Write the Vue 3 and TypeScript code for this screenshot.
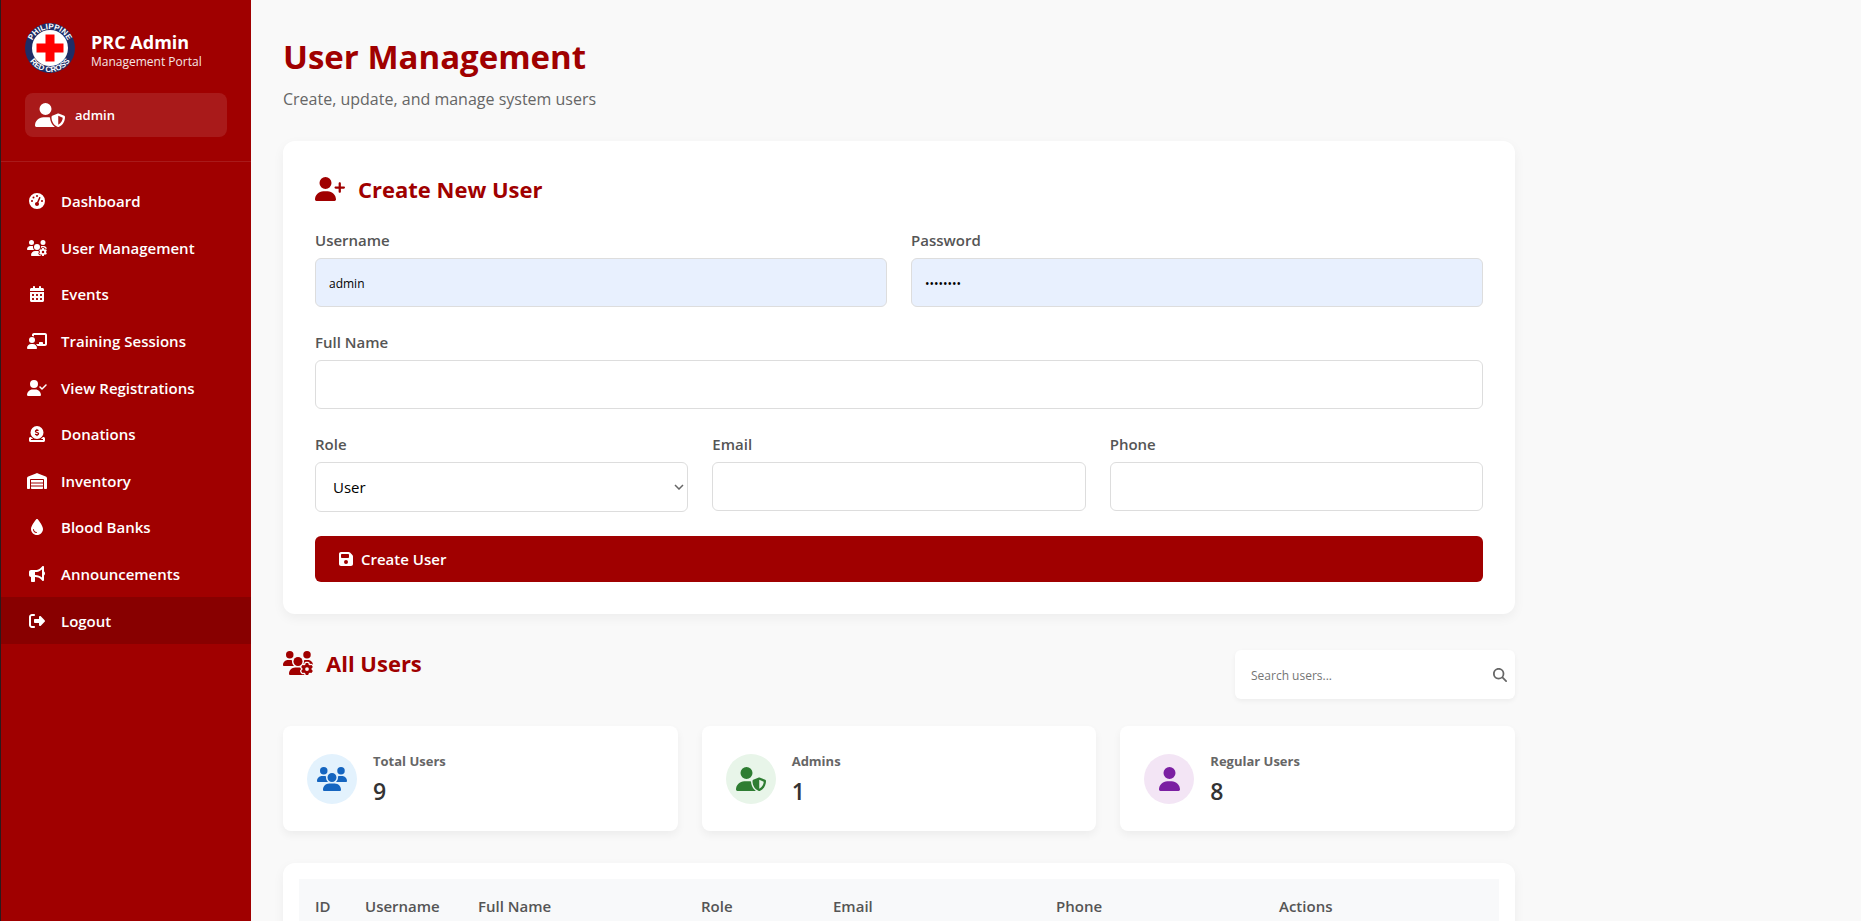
<script setup lang="ts">
import { ref } from 'vue'

interface Icon {
  w: number
  d: string[]
}

const userBody =
  'M96 128a128 128 0 1 1 256 0A128 128 0 1 1 96 128zM0 482.3C0 383.8 79.8 304 178.3 304l91.4 0C368.2 304 448 383.8 448 482.3c0 16.4-13.3 29.7-29.7 29.7L29.7 512C13.3 512 0 498.7 0 482.3z'

const calendarCells = [64, 192, 320]
  .flatMap((x) => [272, 400].map((y) => `M${x} ${y}v32c0 8.800 7.200 16 16 16h32c8.800 0 16-7.200 16-16v-32c0-8.800-7.200-16-16-16h-32c-8.800 0-16 7.200-16 16z`))
  .join('')

const icons: Record<string, Icon> = {
  gauge: {
    w: 512,
    d: ['M0 256a256 256 0 1 1 512 0A256 256 0 1 1 0 256zM288 96a32 32 0 1 0 -64 0 32 32 0 1 0 64 0zM256 416c35.3 0 64-28.7 64-64c0-17.4-6.9-33.1-18.1-44.6L366 161.7c5.3-12.1-.2-26.3-12.3-31.6s-26.3 .2-31.6 12.3L257.9 288c-.6 0-1.3 0-1.9 0c-35.3 0-64 28.7-64 64s28.7 64 64 64zM176 144a32 32 0 1 0 -64 0 32 32 0 1 0 64 0zM96 288a32 32 0 1 0 0-64 32 32 0 1 0 0 64zm352-32a32 32 0 1 0 -64 0 32 32 0 1 0 64 0z'],
  },
  usersGear: {
    w: 640,
    d: [
      'M144 160A80 80 0 1 0 144 0a80 80 0 1 0 0 160zm368 0A80 80 0 1 0 512 0a80 80 0 1 0 0 160zM0 298.7C0 310.4 9.6 320 21.3 320l213.3 0c.2 0 .4 0 .7 0c-26.6-23.5-43.3-57.8-43.3-96c0-7.6 .7-15 1.9-22.3c-13.6-6.3-28.7-9.7-44.6-9.7l-42.7 0C47.800 192 0 239.800 0 298.700z',
      'M416 224a96 96 0 1 0-192 0 96 96 0 1 0 192 0z',
      'M385.400 380.200c-10.300-5.900-18.100-16.200-20.800-28.200l-103.200 0C187.700 352 128 411.700 128 485.300c0 14.700 11.900 26.700 26.700 26.700l300.600 0c-2.100-5.200-3.200-10.900-3.200-16.400l0-3c-1.300-.7-2.700-1.500-4-2.300l-2.600 1.500c-16.800 9.700-40.500 8-54.700-9.700c-4.500-5.600-8.600-11.500-12.400-17.600l-2.600-4.500c-3.500-6.400-6.500-12.800-9.200-19.500c-8.200-21.200 2.200-42.600 19-52.300l2.700-1.500c0-.8 0-1.500 0-2.300s0-1.500 0-2.300l-2.700-1.500z',
      'M533.300 192l-42.700 0c-15.900 0-31 3.500-44.600 9.700c1.300 7.200 1.900 14.700 1.900 22.300c0 17.400-3.500 33.900-9.700 49c2.500 .9 4.900 2 7.100 3.300l2.600 1.500c1.300-.8 2.600-1.600 4-2.300l0-3c0-19.400 13.300-39.100 35.800-42.600c7.900-1.200 16-1.900 24.200-1.900s16.300 .6 24.200 1.900c22.500 3.500 35.800 23.200 35.800 42.600l0 3c1.300 .7 2.700 1.500 4 2.300l2.600-1.500c16.800-9.700 40.500-8 54.700 9.700c2.300 2.800 4.500 5.800 6.600 8.700c-2.100-57.100-49-102.700-106.600-102.700z',
      'M624.600 355.900c6.300-3.600 9.500-11.100 6.800-18c-2.100-5.500-4.600-10.800-7.400-15.900l-2.300-4c-3.100-5.100-6.500-9.900-10.200-14.500c-4.600-5.700-12.700-6.700-19-3l-2.900 1.700c-9.200 5.300-20.400 4-29.600-1.300s-16.100-14.500-16.100-25.100l0-3.400c0-7.300-4.900-13.800-12.100-14.900c-6.500-1-13.100-1.500-19.900-1.500s-13.400 .5-19.900 1.500c-7.200 1.100-12.100 7.600-12.100 14.900l0 3.400c0 10.600-6.900 19.800-16.100 25.100s-20.400 6.600-29.600 1.300l-2.900-1.700c-6.300-3.600-14.400-2.600-19 3c-3.700 4.600-7.100 9.500-10.200 14.600l-2.300 3.900c-2.800 5.100-5.300 10.400-7.400 15.900c-2.600 6.800 .5 14.300 6.800 17.900l2.900 1.700c9.200 5.300 13.700 15.800 13.700 26.400s-4.500 21.100-13.700 26.400l-3 1.700c-6.300 3.600-9.500 11.100-6.800 17.900c2.100 5.500 4.600 10.700 7.400 15.800l2.400 4.100c3 5.100 6.400 9.900 10.100 14.500c4.600 5.700 12.700 6.700 19 3l2.900-1.700c9.200-5.300 20.400-4 29.600 1.300s16.100 14.500 16.100 25.100l0 3.400c0 7.300 4.900 13.800 12.100 14.900c6.500 1 13.100 1.500 19.900 1.500s13.400-.5 19.900-1.500c7.200-1.100 12.100-7.600 12.100-14.900l0-3.400c0-10.600 6.900-19.800 16.100-25.100s20.400-6.600 29.600-1.300l2.900 1.700c6.300 3.600 14.400 2.600 19-3c3.700-4.600 7.100-9.400 10.100-14.500l2.400-4.200c2.800-5.100 5.300-10.300 7.400-15.800c2.600-6.800-.5-14.300-6.800-17.900l-3-1.700c-9.200-5.300-13.700-15.800-13.700-26.400s4.500-21.100 13.700-26.400l3-1.700zM472 384a40 40 0 1 1 80 0 40 40 0 1 1 -80 0z',
    ],
  },
  calendar: {
    w: 448,
    d: [
      'M128 0c17.7 0 32 14.3 32 32l0 32 128 0 0-32c0-17.7 14.3-32 32-32s32 14.3 32 32l0 32 48 0c26.5 0 48 21.5 48 48l0 48L0 160l0-48C0 85.5 21.5 64 48 64l48 0 0-32c0-17.7 14.3-32 32-32z',
      'M0 192l448 0 0 272c0 26.5-21.5 48-48 48L48 512c-26.5 0-48-21.5-48-48L0 192z' + calendarCells,
    ],
  },
  chalkboard: {
    w: 640,
    d: ['M160 64c0-35.3 28.7-64 64-64L576 0c35.3 0 64 28.7 64 64l0 288c0 35.3-28.7 64-64 64l-239.2 0c-11.8-25.5-29.9-47.5-52.4-64l99.6 0 0-32c0-17.7 14.3-32 32-32l64 0c17.7 0 32 14.3 32 32l0 32 64 0 0-288L224 64l0 49.1C205.2 102.2 183.3 96 160 96l0-32zm0 64a96 96 0 1 1 0 192 96 96 0 1 1 0-192zM133.3 352l53.3 0C260.3 352 320 411.7 320 485.3c0 14.7-11.9 26.7-26.7 26.7L26.7 512C11.9 512 0 500.1 0 485.3C0 411.7 59.7 352 133.3 352z'],
  },
  userCheck: {
    w: 640,
    d: [userBody, 'M625 177L497 305c-9.4 9.4-24.6 9.4-33.9 0l-64-64c-9.4-9.4-9.4-24.6 0-33.900s24.600-9.400 33.900 0l47 47L591 143c9.400-9.400 24.600-9.400 33.900 0s9.400 24.600 0 33.900z'],
  },
  donate: {
    w: 512,
    d: [
      'M256 0a208 208 0 1 1 0 416a208 208 0 1 1 0-416zM256 91.9c-11.1 0-20.1 9-20.1 20.1l0 6c-5.6 1.2-10.9 2.9-15.9 5.1c-15 6.8-27.9 19.4-31.1 37.7c-1.8 10.2-.8 20 3.4 29c4.2 8.8 10.7 15 17.3 19.5c11.6 7.9 26.9 12.5 38.6 16l2.2 .7c13.9 4.2 23.4 7.4 29.3 11.7c2.5 1.8 3.4 3.2 3.7 4c.3 .8 .9 2.6 .2 6.7c-.6 3.5-2.5 6.4-8 8.8c-6.1 2.6-16 3.9-28.8 1.9c-6-1-16.7-4.6-26.2-7.9c-2.2-.7-4.3-1.5-6.4-2.1c-10.5-3.5-21.8 2.2-25.3 12.7s2.2 21.8 12.7 25.3c1.2 .4 2.7 .9 4.4 1.5c7.9 2.7 20.3 6.9 29.8 9.1l0 6.400c0 11.100 9 20.100 20.100 20.100s20.100-9 20.100-20.100l0-5.500c5.300-1 10.500-2.500 15.400-4.600c15.700-6.700 28.400-19.700 31.600-38.700c1.800-10.400 1-20.300-3-29.400c-3.900-9-10.200-15.600-16.900-20.500c-12.200-8.800-28.300-13.700-40.400-17.400l-.8-.2c-14.200-4.300-23.800-7.300-29.900-11.400c-2.600-1.800-3.400-3-3.600-3.500c-.2-.3-.7-1.600-.1-5c.3-1.900 1.900-5.200 8.200-8.100c6.400-2.900 16.400-4.500 28.600-2.600c4.300 .7 17.900 3.300 21.700 4.300c10.700 2.800 21.600-3.500 24.500-14.200s-3.500-21.600-14.200-24.500c-4.400-1.200-14.400-3.200-21-4.400l0-6.300c0-11.100-9-20.100-20.100-20.100z',
      'M48 352l16 0c19.500 25.900 44 47.700 72.200 64L64 416l0 32 192 0 192 0 0-32-72.200 0c28.200-16.300 52.800-38.100 72.200-64l16 0c26.500 0 48 21.500 48 48l0 64c0 26.500-21.500 48-48 48L48 512c-26.500 0-48-21.500-48-48l0-64c0-26.500 21.500-48 48-48z',
    ],
  },
  warehouse: {
    w: 640,
    d: ['M0 488L0 171.3c0-26.2 15.9-49.7 40.2-59.4L308.1 4.8c7.6-3.1 16.1-3.1 23.8 0L599.8 111.9c24.3 9.7 40.2 33.3 40.2 59.4L640 488c0 13.3-10.7 24-24 24l-48 0c-13.3 0-24-10.7-24-24l0-264c0-17.7-14.3-32-32-32l-384 0c-17.7 0-32 14.3-32 32l0 264c0 13.3-10.7 24-24 24l-48 0c-13.3 0-24-10.7-24-24zm488 24l-336 0c-13.3 0-24-10.7-24-24l0-56 384 0 0 56c0 13.3-10.7 24-24 24zM128 400l0-64 384 0 0 64-384 0zm0-96l0-80 384 0 0 80-384 0z'],
  },
  droplet: {
    w: 384,
    d: ['M192 512C86 512 0 426 0 320C0 228.8 130.2 57.7 166.6 11.7C172.6 4.2 181.5 0 191.1 0l1.8 0c9.6 0 18.5 4.2 24.5 11.7C253.8 57.7 384 228.8 384 320c0 106-86 192-192 192zM96 336c0-8.8-7.2-16-16-16s-16 7.2-16 16c0 61.9 50.1 112 112 112c8.8 0 16-7.2 16-16s-7.2-16-16-16c-44.2 0-80-35.8-80-80z'],
  },
  bullhorn: {
    w: 512,
    d: ['M480 32c0-12.9-7.8-24.6-19.8-29.6s-25.7-2.2-34.9 6.9L381.7 53c-48 48-113.1 75-181 75l-8.7 0-32 0-96 0c-35.3 0-64 28.7-64 64l0 96c0 35.3 28.7 64 64 64l0 128c0 17.7 14.3 32 32 32l64 0c17.7 0 32-14.3 32-32l0-128 8.7 0c67.9 0 133 27 181 75l43.6 43.6c9.2 9.2 22.9 11.9 34.9 6.9s19.8-16.6 19.8-29.6l0-147.6c18.6-8.8 32-32.5 32-60.4s-13.4-51.6-32-60.4L480 32zm-64 76.7L416 240l0 131.3C357.2 317.8 280.5 288 200.7 288l-8.7 0 0-96 8.7 0c79.8 0 156.5-29.8 215.3-83.3z'],
  },
  logout: {
    w: 512,
    d: ['M377.9 105.9L500.7 228.7c7.2 7.2 11.3 17.1 11.3 27.3s-4.1 20.1-11.3 27.3L377.9 406.1c-6.4 6.4-15 9.9-24 9.9c-18.7 0-33.9-15.2-33.9-33.9l0-62.1-128 0c-17.7 0-32-14.3-32-32l0-64c0-17.7 14.3-32 32-32l128 0 0-62.1c0-18.7 15.2-33.9 33.9-33.9c9 0 17.6 3.6 24 9.9zM160 96L96 96c-17.7 0-32 14.3-32 32l0 256c0 17.7 14.3 32 32 32l64 0c17.7 0 32 14.3 32 32s-14.3 32-32 32l-64 0c-53 0-96-43-96-96L0 128C0 75 43 32 96 32l64 0c17.7 0 32 14.3 32 32s-14.3 32-32 32z'],
  },
  userShield: {
    w: 640,
    d: ['M224 256A128 128 0 1 0 224 0a128 128 0 1 0 0 256zm-45.7 48C79.8 304 0 383.8 0 482.3C0 498.7 13.3 512 29.7 512l388.6 0c1.8 0 3.5-.2 5.3-.5c-76.3-55.1-99.8-141-103.1-200.2c-16.1-4.8-33.1-7.3-50.7-7.3l-91.4 0zm308.8-78.3l-120 48C358 277.4 352 286.2 352 296c0 63.3 25.9 168.8 134.8 214.2c5.9 2.5 12.6 2.5 18.5 0C614.1 464.8 640 359.3 640 296c0-9.8-6-18.6-15.1-22.3l-120-48c-5.7-2.3-12.1-2.3-17.8 0zM591.4 312c-3.9 50.7-27.2 116.7-95.4 149.7l0-187.8L591.4 312z'],
  },
  userPlus: {
    w: 640,
    d: [userBody, 'M504 312l0-64-64 0c-13.3 0-24-10.7-24-24s10.7-24 24-24l64 0 0-64c0-13.3 10.7-24 24-24s24 10.7 24 24l0 64 64 0c13.3 0 24 10.7 24 24s-10.7 24-24 24l-64 0 0 64c0 13.3-10.7 24-24 24s-24-10.7-24-24z'],
  },
  users: {
    w: 640,
    d: ['M144 0a80 80 0 1 1 0 160A80 80 0 1 1 144 0zM512 0a80 80 0 1 1 0 160A80 80 0 1 1 512 0zM0 298.7C0 239.8 47.8 192 106.7 192l42.7 0c15.9 0 31 3.5 44.6 9.7c-1.3 7.2-1.9 14.7-1.9 22.3c0 38.2 16.8 72.5 43.3 96c-.2 0-.4 0-.7 0L21.3 320C9.6 320 0 310.4 0 298.7zM405.3 320c-.2 0-.4 0-.7 0c26.6-23.5 43.3-57.8 43.3-96c0-7.6-.7-15-1.9-22.3c13.6-6.3 28.7-9.7 44.6-9.7l42.7 0C592.2 192 640 239.8 640 298.7c0 11.8-9.6 21.3-21.3 21.3l-213.3 0zM224 224a96 96 0 1 1 192 0 96 96 0 1 1 -192 0zM128 485.3C128 411.7 187.7 352 261.3 352l117.3 0C452.3 352 512 411.7 512 485.3c0 14.7-11.9 26.7-26.7 26.7l-330.7 0c-14.7 0-26.7-11.9-26.7-26.7z'],
  },
  user: { w: 448, d: [userBody] },
  save: {
    w: 448,
    d: ['M64 32C28.7 32 0 60.7 0 96L0 416c0 35.3 28.7 64 64 64l320 0c35.3 0 64-28.7 64-64l0-242.7c0-17-6.7-33.3-18.7-45.3L352 50.7C340 38.7 323.7 32 306.7 32L64 32zm0 96c0-17.7 14.3-32 32-32l192 0c17.7 0 32 14.3 32 32l0 64c0 17.7-14.3 32-32 32L96 224c-17.7 0-32-14.3-32-32l0-64zM224 288a64 64 0 1 1 0 128 64 64 0 1 1 0-128z'],
  },
}

const navItems = [
  { label: 'Dashboard', icon: icons.gauge },
  { label: 'User Management', icon: icons.usersGear },
  { label: 'Events', icon: icons.calendar },
  { label: 'Training Sessions', icon: icons.chalkboard },
  { label: 'View Registrations', icon: icons.userCheck },
  { label: 'Donations', icon: icons.donate },
  { label: 'Inventory', icon: icons.warehouse },
  { label: 'Blood Banks', icon: icons.droplet },
  { label: 'Announcements', icon: icons.bullhorn },
  { label: 'Logout', icon: icons.logout, dark: true },
]

const stats = [
  { label: 'Total Users', value: 9, icon: icons.users, tone: 'blue' },
  { label: 'Admins', value: 1, icon: icons.userShield, tone: 'green' },
  { label: 'Regular Users', value: 8, icon: icons.user, tone: 'purple' },
]

const columns = [
  { label: 'ID', cls: 'c-id' },
  { label: 'Username', cls: 'c-username' },
  { label: 'Full Name', cls: 'c-name' },
  { label: 'Role', cls: 'c-role' },
  { label: 'Email', cls: 'c-email' },
  { label: 'Phone', cls: 'c-phone' },
  { label: 'Actions', cls: 'c-actions' },
]

const username = ref('admin')
const password = ref('password')
const fullName = ref('')
const role = ref('User')
const email = ref('')
const phone = ref('')
const search = ref('')
</script>

<template>
  <div class="shell">
    <aside class="sidebar">
      <header class="side-head">
        <div class="brand">
          <svg class="logo" viewBox="0 0 100 100" role="img" aria-label="Philippine Red Cross">
            <defs>
              <path id="arc-top" d="M12 50a38 38 0 0 1 76 0" />
              <path id="arc-bottom" d="M2 50a48 48 0 0 0 96 0" />
            </defs>
            <circle cx="50" cy="50" r="50" fill="#1f2d66" />
            <circle cx="50" cy="50" r="36" fill="#fff" />
            <path d="M41 23h18v18h18v18H59v18H41V59H23V41h18z" fill="#f00" />
            <text class="logo-text" text-anchor="middle"><textPath href="#arc-top" startOffset="50%">PHILIPPINE</textPath></text>
            <text class="logo-text" text-anchor="middle"><textPath href="#arc-bottom" startOffset="50%">RED CROSS</textPath></text>
          </svg>
          <div class="brand-text">
            <strong>PRC Admin</strong>
            <span>Management Portal</span>
          </div>
        </div>
        <div class="account">
          <svg class="ico24" :viewBox="`0 0 ${icons.userShield.w} 512`" aria-hidden="true">
            <path v-for="d in icons.userShield.d" :key="d" :d="d" />
          </svg>
          <span>admin</span>
        </div>
      </header>
      <nav class="nav">
        <a v-for="item in navItems" :key="item.label" href="#" :class="{ dark: item.dark }">
          <span class="nav-ico">
            <svg class="ico16" :viewBox="`0 0 ${item.icon.w} 512`" aria-hidden="true">
              <path v-for="d in item.icon.d" :key="d" :d="d" />
            </svg>
          </span>
          {{ item.label }}
        </a>
      </nav>
    </aside>

    <main class="main">
      <div class="content">
        <header class="page-head">
          <h1>User Management</h1>
          <p>Create, update, and manage system users</p>
        </header>

        <section class="card form-card">
          <h2>
            <svg class="ico24" viewBox="0 0 640 512" aria-hidden="true">
              <path v-for="d in icons.userPlus.d" :key="d" :d="d" />
            </svg>
            Create New User
          </h2>
          <form @submit.prevent>
            <div class="row">
              <div class="field">
                <label for="username">Username</label>
                <input id="username" v-model="username" class="filled" type="text" autocomplete="off" />
              </div>
              <div class="field">
                <label for="password">Password</label>
                <input id="password" v-model="password" class="filled" type="password" autocomplete="off" />
              </div>
            </div>
            <div class="row">
              <div class="field">
                <label for="fullname">Full Name</label>
                <input id="fullname" v-model="fullName" type="text" />
              </div>
            </div>
            <div class="row">
              <div class="field">
                <label for="role">Role</label>
                <div class="select">
                  <select id="role" v-model="role">
                    <option>User</option>
                    <option>Admin</option>
                  </select>
                  <svg viewBox="0 0 10 6" aria-hidden="true"><path d="M1 1l4 4 4-4" /></svg>
                </div>
              </div>
              <div class="field">
                <label for="email">Email</label>
                <input id="email" v-model="email" type="email" />
              </div>
              <div class="field">
                <label for="phone">Phone</label>
                <input id="phone" v-model="phone" type="tel" />
              </div>
            </div>
            <button class="submit" type="submit">
              <svg class="ico16" viewBox="0 0 448 512" aria-hidden="true">
                <path v-for="d in icons.save.d" :key="d" :d="d" />
              </svg>
              Create User
            </button>
          </form>
        </section>

        <section class="users">
          <div class="users-head">
            <h2>
              <svg class="ico24" viewBox="0 0 640 512" aria-hidden="true">
                <path v-for="d in icons.usersGear.d" :key="d" :d="d" />
              </svg>
              All Users
            </h2>
            <div class="search">
              <input v-model="search" type="text" placeholder="Search users..." aria-label="Search users" />
              <button type="button" aria-label="Search">
                <svg viewBox="0 0 512 512" aria-hidden="true">
                  <path d="M416 208c0 45.9-14.9 88.3-40 122.700L502.600 457.400c12.500 12.500 12.500 32.800 0 45.300s-32.800 12.500-45.300 0L330.700 376c-34.400 25.200-76.800 40-122.700 40C93.100 416 0 322.900 0 208S93.100 0 208 0S416 93.100 416 208zM208 352a144 144 0 1 0 0-288 144 144 0 1 0 0 288z" />
                </svg>
              </button>
            </div>
          </div>

          <div class="stats">
            <article v-for="s in stats" :key="s.label" class="stat">
              <div class="bubble" :class="s.tone">
                <svg class="ico24" :viewBox="`0 0 ${s.icon.w} 512`" aria-hidden="true">
                  <path v-for="d in s.icon.d" :key="d" :d="d" />
                </svg>
              </div>
              <div>
                <h3>{{ s.label }}</h3>
                <p>{{ s.value }}</p>
              </div>
            </article>
          </div>

          <div class="card table-card">
            <table>
              <thead>
                <tr>
                  <th v-for="c in columns" :key="c.label" :class="c.cls" scope="col">{{ c.label }}</th>
                </tr>
              </thead>
            </table>
          </div>
        </section>
      </div>
    </main>
  </div>
</template>

<style>
body {
  background: #f9f9f9;
}
</style>

<style scoped>
.shell,
.shell * {
  box-sizing: border-box;
}
.shell {
  display: flex;
  height: 100vh;
  font-family: "Open Sans", "Noto Sans", sans-serif;
  color: #333;
  border-left: 1px solid #2b1a1d;
  overflow: hidden;
}
h1,
h2,
h3,
p {
  margin: 0;
}
svg {
  display: block;
  flex: none;
  fill: currentColor;
}
.ico24 {
  height: 24px;
}
.ico16 {
  height: 16px;
}

.sidebar {
  flex: 0 0 250px;
  background: #a00000;
  color: #fff;
}
.side-head {
  padding: 23px 24px 24px;
  border-bottom: 1px solid rgba(255, 255, 255, 0.1);
}
.brand {
  display: flex;
  align-items: center;
  gap: 16px;
  margin-bottom: 20px;
}
.logo {
  width: 50px;
  height: 50px;
}
.logo-text {
  font: 700 16px "Liberation Sans", sans-serif;
  fill: #fff;
}
.brand-text {
  padding-top: 6px;
}
.brand-text strong {
  display: block;
  font-size: 18px;
  line-height: 22px;
  font-weight: 700;
}
.brand-text span {
  display: block;
  font-size: 12px;
  line-height: 18px;
  opacity: 0.9;
}
.account {
  display: flex;
  align-items: center;
  gap: 10px;
  padding: 10px;
  border-radius: 8px;
  background: rgba(255, 255, 255, 0.1);
  font-size: 13px;
  line-height: 24px;
  font-weight: 600;
}
.nav {
  display: grid;
  grid-auto-rows: 1fr;
  min-height: 466px;
  margin-top: 16px;
}
.nav a {
  display: flex;
  align-items: center;
  gap: 12px;
  padding: 0 24px;
  color: #fff;
  font-size: 15px;
  font-weight: 600;
  text-decoration: none;
}
.nav a.dark {
  background: #880000;
}
.nav-ico {
  width: 24px;
  display: flex;
  justify-content: center;
}

.main {
  flex: 1;
  min-width: 0;
  padding: 32px;
  overflow-y: auto;
  scrollbar-width: none;
}
.content {
  max-width: 1232px;
}
.page-head {
  margin-bottom: 30px;
}
h1 {
  color: #a00000;
  font-size: 33px;
  line-height: 50px;
  font-weight: 700;
}
.page-head p {
  margin-top: 5px;
  color: #666;
  font-size: 16px;
  line-height: 24px;
}
.card {
  background: #fff;
  border-radius: 12px;
  box-shadow: 0 4px 12px rgba(0, 0, 0, 0.05);
}
.form-card {
  padding: 32px;
}
h2 {
  display: flex;
  align-items: center;
  gap: 13px;
  color: #a00000;
  font-size: 22px;
  line-height: 32px;
  font-weight: 700;
}
form {
  display: flex;
  flex-direction: column;
  gap: 24px;
  margin-top: 24px;
}
.row {
  display: flex;
  align-items: flex-start;
  gap: 24px;
}
.field {
  flex: 1 1 0;
  min-width: 0;
}
label {
  display: block;
  margin-bottom: 7px;
  color: #555;
  font-size: 15px;
  line-height: 22px;
  font-weight: 600;
}
.field input,
select {
  display: block;
  width: 100%;
  height: 49px;
  padding: 2px 13px 0;
  border: 1px solid #ddd;
  border-radius: 6px;
  background: #fff;
  color: #000;
  font-family: inherit;
  font-size: 12px;
}
.field input.filled {
  background: #e8f0fe;
}
.select {
  position: relative;
}
select {
  height: 50px;
  padding: 0 17px;
  font-size: 15px;
  appearance: none;
}
.select svg {
  position: absolute;
  right: 4px;
  top: 50%;
  width: 10px;
  height: 6px;
  margin-top: -3px;
  fill: none;
  stroke: #666;
  stroke-width: 1.5;
  pointer-events: none;
}
.submit {
  display: flex;
  align-items: center;
  gap: 8px;
  height: 46px;
  padding: 0 24px;
  border: 0;
  border-radius: 6px;
  background: #a00000;
  color: #fff;
  font-family: inherit;
  font-size: 15px;
  font-weight: 600;
}
.users {
  margin-top: 36px;
}
.users-head {
  display: flex;
  justify-content: space-between;
  align-items: flex-start;
  margin-bottom: 27px;
}
.users-head h2 {
  line-height: 26px;
}
.search {
  display: flex;
  align-items: center;
  width: 280px;
  height: 49px;
  border-radius: 6px;
  background: #fff;
  box-shadow: 0 2px 5px rgba(0, 0, 0, 0.05);
}
.search input {
  flex: 1;
  min-width: 0;
  height: 100%;
  padding: 2px 16px 0;
  border: 0;
  background: none;
  font-family: inherit;
  font-size: 12px;
}
.search input::placeholder {
  color: #757575;
}
.search button {
  padding: 8px;
  border: 0;
  background: none;
  color: #666;
}
.search svg {
  width: 14px;
  height: 14px;
}
.stats {
  display: grid;
  grid-template-columns: repeat(3, 1fr);
  gap: 24px;
  margin-bottom: 32px;
}
.stat {
  display: flex;
  align-items: center;
  gap: 16px;
  min-height: 105px;
  padding: 24px;
  border-radius: 8px;
  background: #fff;
  box-shadow: 0 4px 8px rgba(0, 0, 0, 0.05);
}
.bubble {
  display: grid;
  place-items: center;
  width: 50px;
  height: 50px;
  border-radius: 50%;
}
.blue {
  background: #e3f2fd;
  color: #1565c0;
}
.green {
  background: #e8f5e9;
  color: #2e7d32;
}
.purple {
  background: #f3e5f5;
  color: #7b1fa2;
}
h3 {
  margin-bottom: 4px;
  color: #666;
  font-size: 13px;
  line-height: 20px;
  font-weight: 700;
}
.stat p {
  font-size: 23px;
  line-height: 32px;
  font-weight: 600;
}
.table-card {
  padding: 16px;
}
table {
  width: 100%;
  table-layout: fixed;
  border-collapse: collapse;
}
th {
  padding: 16px;
  background: #f8f9fa;
  color: #555;
  font-size: 15px;
  line-height: 22px;
  font-weight: 600;
  text-align: left;
}
.c-id {
  width: 50px;
}
.c-username {
  width: 113px;
}
.c-name {
  width: 223px;
}
.c-role {
  width: 132px;
}
.c-email,
.c-phone {
  width: 223px;
}
.c-actions {
  width: 236px;
}
</style>
